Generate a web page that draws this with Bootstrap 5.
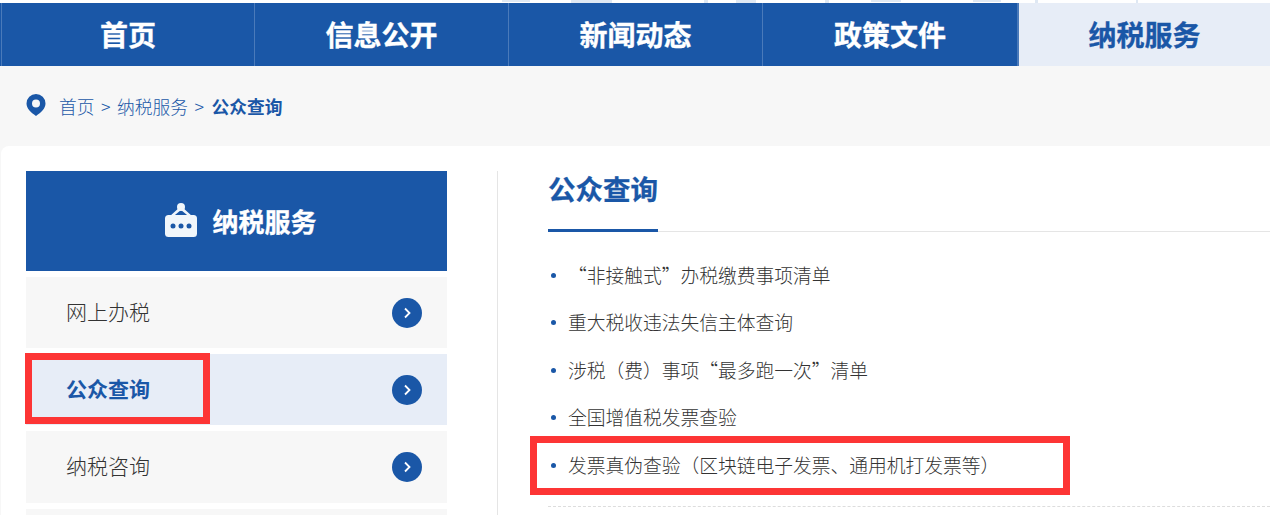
<!DOCTYPE html>
<html lang="zh">
<head>
<meta charset="utf-8">
<title>公众查询</title>
<link href="https://cdn.jsdelivr.net/npm/bootstrap@5.3.0/dist/css/bootstrap.min.css" rel="stylesheet">
<style>
html,body{height:515px;overflow:hidden}
body{margin:0;background:#f7f7f7;font-family:"Noto Sans CJK SC","Liberation Sans",sans-serif;color:#333}
.topstrip{height:3px;background:#fff;overflow:hidden}
.topstrip svg{display:block}
.mainnav{height:63px;background:#1a57a7;padding-left:1px}
.mainnav a{flex:0 0 254px;height:63px;line-height:62px;text-align:center;color:#fff;font-size:28px;font-weight:700;-webkit-text-stroke:.35px currentColor;text-decoration:none;border-left:1px solid #4a7aba}
.mainnav a:first-child{flex-basis:253px}
.mainnav a:nth-child(4){flex-basis:255px}
.mainnav a.on{background:#e7edf7;color:#1a57a7;border-left:2px solid #4a7aba;flex:1 1 auto}
.crumbs{height:80px;padding-left:26px;font-size:17.75px;font-weight:300;color:#1a57a7}
.crumbs a{color:#1a57a7;text-decoration:none}
.crumbs .sep{margin:0 6.5px}
.crumbs b{font-weight:700;margin-left:1px}
.crumbs svg{margin-right:13px;margin-top:-2px;flex-shrink:0}
.panel{position:relative;margin-left:1px;height:369px;overflow:hidden;background:#fff;border-radius:8px 0 0 0;padding:25px 0 0 25px}
.sidebox{flex:0 0 421px}
.sidehead{height:100px;background:#1a57a7;color:#fff;font-size:26px;font-weight:700;-webkit-text-stroke:.35px currentColor;margin-bottom:6px;padding:0 0 2px 8px}
.sidehead svg{margin-right:14px}
.sideitem{height:71.2px;background:#f7f7f7;margin-bottom:6px;padding:0 25px 0 40px;font-size:21px;font-weight:300;color:#333;text-decoration:none}
.sideitem>span:first-child{padding-bottom:2px}
.sideitem.on{background:#e7edf7;color:#1a57a7;font-weight:700}
.roundarrow{width:30px;height:30px;border-radius:50%;background:#1a57a7}
.mainpart{margin-left:50px;border-left:1px solid #e5e5e5;padding-left:50px;flex:1 1 auto}
.titlebar{height:61px;border-bottom:1px solid #e5e5e5;position:relative}
.titlebar h2{display:inline-block;height:61px;margin:0;font-size:27.5px;line-height:35px;font-weight:700;-webkit-text-stroke:.3px currentColor;color:#1a57a7;border-bottom:3px solid #1a57a7}
.infolist{list-style:none;margin:18.7px 0 0;padding:0;font-size:18.75px;font-weight:300}
.infolist li{height:47.5px;line-height:47.5px;padding-left:20px;position:relative}
.infolist li::before{content:"";position:absolute;left:3px;top:22px;width:5px;height:5px;border-radius:50%;background:#1a57a7}
.dashline{border-top:1px dashed #ddd;margin-top:18px}
.redframe{position:absolute;border:7px solid #fd3535}
.redone{left:24px;top:207px;width:185px;height:71px}
.redtwo{left:529px;top:290px;width:540px;height:59px}
</style>
</head>
<body>
<div class="topstrip">
  <svg width="1270" height="3" viewBox="0 0 1270 3"><g fill="#dfe8f3"><rect x="502" y="0" width="28" height="2"/><rect x="571" y="0" width="41" height="3"/><rect x="704" y="0" width="4" height="3"/><rect x="736" y="0" width="20" height="3"/><rect x="825" y="0" width="4" height="3"/><rect x="871" y="0" width="30" height="2"/><rect x="973" y="0" width="28" height="2"/><rect x="1035" y="0" width="3" height="3"/><rect x="1136" y="0" width="2" height="3"/></g></svg>
</div>
<nav class="mainnav d-flex">
  <a href="#">首页</a>
  <a href="#">信息公开</a>
  <a href="#">新闻动态</a>
  <a href="#">政策文件</a>
  <a href="#" class="on">纳税服务</a>
</nav>
<div class="crumbs d-flex align-items-center">
  <svg width="20" height="24" viewBox="0 0 20 24"><path fill="#1a57a7" fill-rule="evenodd" d="M10 1a9.500 9.500 0 0 1 9.500 9.500c0 5-4.200 8.800-9.500 12.500C4.700 19.300.5 15.500.5 10.500A9.500 9.500 0 0 1 10 1Zm0 5.500a4 4 0 1 0 0 8 4 4 0 0 0 0-8Z"/></svg>
  <a href="#">首页</a><span class="sep">&gt;</span><a href="#">纳税服务</a><span class="sep">&gt;</span><b>公众查询</b>
</div>
<div class="panel d-flex">
  <aside class="sidebox">
    <div class="sidehead d-flex align-items-center justify-content-center">
      <svg width="34" height="36" viewBox="0 0 34 36"><g fill="#f0f6fb"><circle cx="17" cy="5" r="4"/><path d="M17 4 5 15h3.500L17 8l8.500 7H29Z"/><rect x="1" y="13" width="32" height="22" rx="3.500"/></g><g fill="#1a57a7"><circle cx="9" cy="24" r="2.500"/><circle cx="17" cy="24" r="2.500"/><circle cx="25" cy="24" r="2.500"/></g></svg>
      <span>纳税服务</span>
    </div>
    <a href="#" class="sideitem d-flex align-items-center justify-content-between"><span>网上办税</span><span class="roundarrow d-flex align-items-center justify-content-center"><svg width="10" height="12" viewBox="0 0 10 12"><path d="M3 1.500 7.500 6 3 10.500" fill="none" stroke="#fff" stroke-width="1.800"/></svg></span></a>
    <a href="#" class="sideitem on d-flex align-items-center justify-content-between"><span>公众查询</span><span class="roundarrow d-flex align-items-center justify-content-center"><svg width="10" height="12" viewBox="0 0 10 12"><path d="M3 1.500 7.500 6 3 10.500" fill="none" stroke="#fff" stroke-width="1.800"/></svg></span></a>
    <a href="#" class="sideitem d-flex align-items-center justify-content-between"><span>纳税咨询</span><span class="roundarrow d-flex align-items-center justify-content-center"><svg width="10" height="12" viewBox="0 0 10 12"><path d="M3 1.500 7.500 6 3 10.500" fill="none" stroke="#fff" stroke-width="1.800"/></svg></span></a>
    <div class="sideitem"></div>
  </aside>
  <section class="mainpart">
    <div class="titlebar"><h2>公众查询</h2></div>
    <ul class="infolist">
      <li>“非接触式”办税缴费事项清单</li>
      <li>重大税收违法失信主体查询</li>
      <li>涉税（费）事项“最多跑一次”清单</li>
      <li>全国增值税发票查验</li>
      <li>发票真伪查验（区块链电子发票、通用机打发票等）</li>
    </ul>
    <div class="dashline"></div>
  </section>
  <div class="redframe redone"></div>
  <div class="redframe redtwo"></div>
</div>
</body>
</html>
